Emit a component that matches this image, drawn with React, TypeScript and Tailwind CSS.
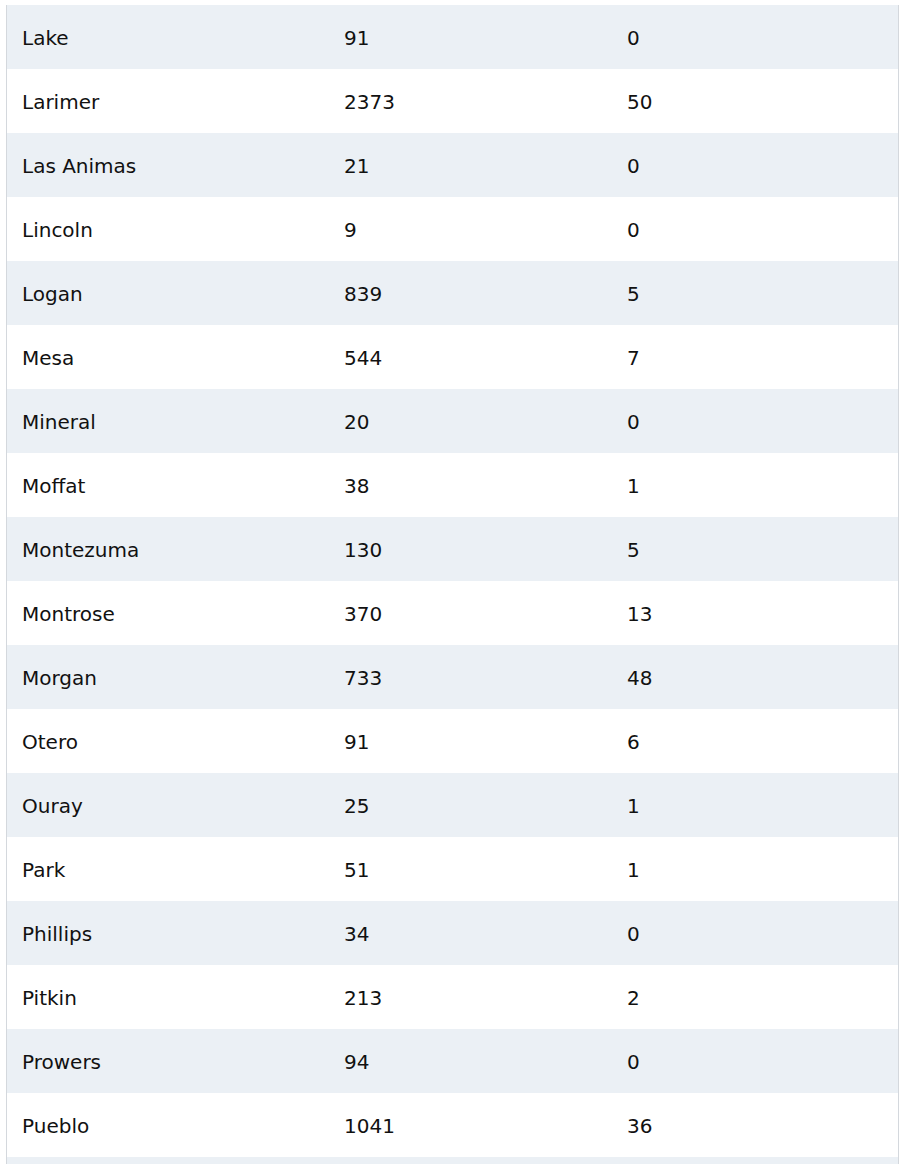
const rows: [string, string, string][] = [
  ['Lake', '91', '0'],
  ['Larimer', '2373', '50'],
  ['Las Animas', '21', '0'],
  ['Lincoln', '9', '0'],
  ['Logan', '839', '5'],
  ['Mesa', '544', '7'],
  ['Mineral', '20', '0'],
  ['Moffat', '38', '1'],
  ['Montezuma', '130', '5'],
  ['Montrose', '370', '13'],
  ['Morgan', '733', '48'],
  ['Otero', '91', '6'],
  ['Ouray', '25', '1'],
  ['Park', '51', '1'],
  ['Phillips', '34', '0'],
  ['Pitkin', '213', '2'],
  ['Prowers', '94', '0'],
  ['Pueblo', '1041', '36'],
];

export default function App() {
  return (
    <div className="h-[1164px] overflow-hidden bg-white pt-[5px] pl-[6px] pr-[5px]">
      <div className="border-l border-r border-[#d4d8dd] text-[20px] text-[#111] font-['DejaVu_Sans',sans-serif]">
        {rows.map((r, i) => (
          <div
            key={r[0]}
            className={`grid grid-cols-[322px_283px_1fr] h-16 items-center pt-[2px] ${i % 2 === 0 ? 'bg-[#ebf0f5]' : 'bg-white'}`}
          >
            <div className="pl-[15px]">{r[0]}</div>
            <div className="pl-[15px]">{r[1]}</div>
            <div className="pl-[15px]">{r[2]}</div>
          </div>
        ))}
        {/* next row peeks in at the bottom edge */}
        <div className="h-16 bg-[#ebf0f5]" />
      </div>
    </div>
  );
}
